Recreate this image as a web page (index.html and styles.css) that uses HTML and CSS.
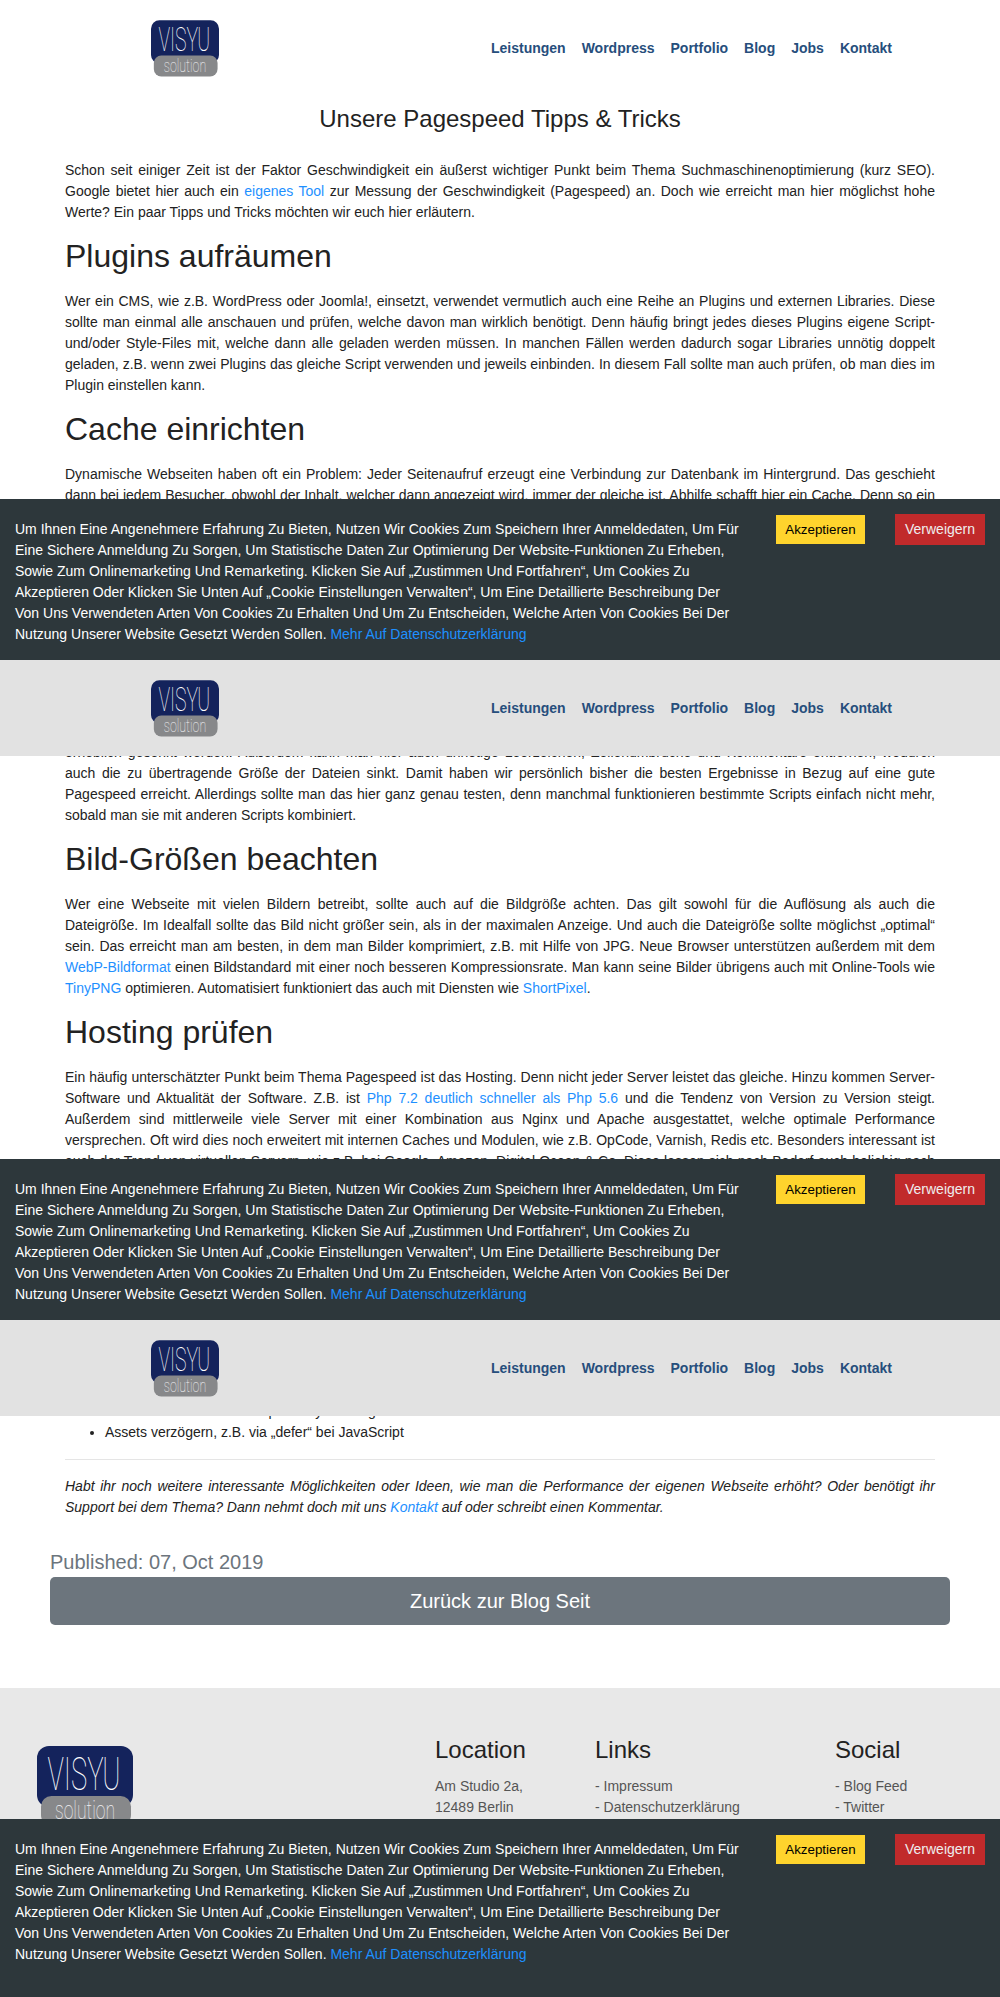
FILE: index.html
```html
<!DOCTYPE html>
<html lang="de">
<head>
<meta charset="utf-8">
<title>Unsere Pagespeed Tipps &amp; Tricks</title>
<link rel="stylesheet" href="styles.css">
</head>
<body>
<svg class="defs" width="0" height="0" aria-hidden="true">
  <symbol id="logo" viewBox="0 0 96 80">
    <rect width="96" height="61" rx="12" fill="#14235c"/>
    <rect x="4" y="50" width="90" height="29.5" rx="10.5" fill="#87888a"/>
    <text class="logo-top" x="10.5" y="44" textLength="73" lengthAdjust="spacingAndGlyphs">VISYU</text>
    <text class="logo-bottom" x="18" y="73" textLength="60" lengthAdjust="spacingAndGlyphs">solution</text>
  </symbol>
</svg>

<section class="screen">
  <header class="header">
    <svg class="logo"><use href="#logo"/></svg>
    <nav class="nav"><a>Leistungen</a><a>Wordpress</a><a>Portfolio</a><a>Blog</a><a>Jobs</a><a>Kontakt</a></nav>
  </header>
  <main class="content">
    <h1 class="title">Unsere Pagespeed Tipps &amp; Tricks</h1>
    <article class="article">
      <p>Schon seit einiger Zeit ist der Faktor Geschwindigkeit ein äußerst wichtiger Punkt beim Thema Suchmaschinenoptimierung (kurz SEO). Google bietet hier auch ein <a>eigenes Tool</a> zur Messung der Geschwindigkeit (Pagespeed) an. Doch wie erreicht man hier möglichst hohe Werte? Ein paar Tipps und Tricks möchten wir euch hier erläutern.</p>
      <h2>Plugins aufräumen</h2>
      <p>Wer ein CMS, wie z.B. WordPress oder Joomla!, einsetzt, verwendet vermutlich auch eine Reihe an Plugins und externen Libraries. Diese sollte man einmal alle anschauen und prüfen, welche davon man wirklich benötigt. Denn häufig bringt jedes dieses Plugins eigene Script- und/oder Style-Files mit, welche dann alle geladen werden müssen. In manchen Fällen werden dadurch sogar Libraries unnötig doppelt geladen, z.B. wenn zwei Plugins das gleiche Script verwenden und jeweils einbinden. In diesem Fall sollte man auch prüfen, ob man dies im Plugin einstellen kann.</p>
      <h2>Cache einrichten</h2>
      <p class="continued">Dynamische Webseiten haben oft ein Problem: Jeder Seitenaufruf erzeugt eine Verbindung zur Datenbank im Hintergrund. Das geschieht dann bei jedem Besucher, obwohl der Inhalt, welcher dann angezeigt wird, immer der gleiche ist. Abhilfe schafft hier ein Cache. Denn so ein</p>
    </article>
  </main>
  <aside class="cookie">
    <p class="cookie-text">Um Ihnen Eine Angenehmere Erfahrung Zu Bieten, Nutzen Wir Cookies Zum Speichern Ihrer Anmeldedaten, Um Für Eine Sichere Anmeldung Zu Sorgen, Um Statistische Daten Zur Optimierung Der Website-Funktionen Zu Erheben, Sowie Zum Onlinemarketing Und Remarketing. Klicken Sie Auf „Zustimmen Und Fortfahren“, Um Cookies Zu Akzeptieren Oder Klicken Sie Unten Auf „Cookie Einstellungen Verwalten“, Um Eine Detaillierte Beschreibung Der Von Uns Verwendeten Arten Von Cookies Zu Erhalten Und Um Zu Entscheiden, Welche Arten Von Cookies Bei Der Nutzung Unserer Website Gesetzt Werden Sollen. <a>Mehr Auf Datenschutzerklärung</a></p>
    <button class="accept">Akzeptieren</button>
    <button class="decline">Verweigern</button>
  </aside>
</section>

<section class="screen">
  <header class="header header-scrolled">
    <svg class="logo"><use href="#logo"/></svg>
    <nav class="nav"><a>Leistungen</a><a>Wordpress</a><a>Portfolio</a><a>Blog</a><a>Jobs</a><a>Kontakt</a></nav>
  </header>
  <main class="content">
    <article class="article article-middle">
      <p>erheblich gesenkt werden. Außerdem kann man hier auch unnötige Leerzeichen, Zeilenumbrüche und Kommentare entfernen, wodurch auch die zu übertragende Größe der Dateien sinkt. Damit haben wir persönlich bisher die besten Ergebnisse in Bezug auf eine gute Pagespeed erreicht. Allerdings sollte man das hier ganz genau testen, denn manchmal funktionieren bestimmte Scripts einfach nicht mehr, sobald man sie mit anderen Scripts kombiniert.</p>
      <h2>Bild-Größen beachten</h2>
      <p>Wer eine Webseite mit vielen Bildern betreibt, sollte auch auf die Bildgröße achten. Das gilt sowohl für die Auflösung als auch die Dateigröße. Im Idealfall sollte das Bild nicht größer sein, als in der maximalen Anzeige. Und auch die Dateigröße sollte möglichst „optimal“ sein. Das erreicht man am besten, in dem man Bilder komprimiert, z.B. mit Hilfe von JPG. Neue Browser unterstützen außerdem mit dem <a>WebP-Bildformat</a> einen Bildstandard mit einer noch besseren Kompressionsrate. Man kann seine Bilder übrigens auch mit Online-Tools wie <a>TinyPNG</a> optimieren. Automatisiert funktioniert das auch mit Diensten wie <a>ShortPixel</a>.</p>
      <h2>Hosting prüfen</h2>
      <p class="continued">Ein häufig unterschätzter Punkt beim Thema Pagespeed ist das Hosting. Denn nicht jeder Server leistet das gleiche. Hinzu kommen Server-Software und Aktualität der Software. Z.B. ist <a>Php 7.2 deutlich schneller als Php 5.6</a> und die Tendenz von Version zu Version steigt. Außerdem sind mittlerweile viele Server mit einer Kombination aus Nginx und Apache ausgestattet, welche optimale Performance versprechen. Oft wird dies noch erweitert mit internen Caches und Modulen, wie z.B. OpCode, Varnish, Redis etc. Besonders interessant ist auch der Trend von virtuellen Servern, wie z.B. bei Google, Amazon, Digital Ocean &amp; Co. Diese lassen sich nach Bedarf auch beliebig nach</p>
    </article>
  </main>
  <aside class="cookie">
    <p class="cookie-text">Um Ihnen Eine Angenehmere Erfahrung Zu Bieten, Nutzen Wir Cookies Zum Speichern Ihrer Anmeldedaten, Um Für Eine Sichere Anmeldung Zu Sorgen, Um Statistische Daten Zur Optimierung Der Website-Funktionen Zu Erheben, Sowie Zum Onlinemarketing Und Remarketing. Klicken Sie Auf „Zustimmen Und Fortfahren“, Um Cookies Zu Akzeptieren Oder Klicken Sie Unten Auf „Cookie Einstellungen Verwalten“, Um Eine Detaillierte Beschreibung Der Von Uns Verwendeten Arten Von Cookies Zu Erhalten Und Um Zu Entscheiden, Welche Arten Von Cookies Bei Der Nutzung Unserer Website Gesetzt Werden Sollen. <a>Mehr Auf Datenschutzerklärung</a></p>
    <button class="accept">Akzeptieren</button>
    <button class="decline">Verweigern</button>
  </aside>
</section>

<section class="screen screen-last">
  <header class="header header-scrolled">
    <svg class="logo"><use href="#logo"/></svg>
    <nav class="nav"><a>Leistungen</a><a>Wordpress</a><a>Portfolio</a><a>Blog</a><a>Jobs</a><a>Kontakt</a></nav>
  </header>
  <main class="content">
    <article class="article article-end">
      <ul>
        <li>Einbinden von Elementen per Lazy Loading</li>
        <li>Assets verzögern, z.B. via „defer“ bei JavaScript</li>
      </ul>
      <hr>
      <p><em>Habt ihr noch weitere interessante Möglichkeiten oder Ideen, wie man die Performance der eigenen Webseite erhöht? Oder benötigt ihr Support bei dem Thema? Dann nehmt doch mit uns <a>Kontakt</a> auf oder schreibt einen Kommentar.</em></p>
    </article>
    <div class="meta">
      <div class="published">Published: 07, Oct 2019</div>
      <a class="back">Zurück zur Blog Seit</a>
    </div>
    <footer class="footer">
      <svg class="footer-logo"><use href="#logo"/></svg>
      <div><h3>Location</h3>Am Studio 2a,<br>12489 Berlin</div>
      <div><h3>Links</h3>- Impressum<br>- Datenschutzerklärung</div>
      <div><h3>Social</h3>- Blog Feed<br>- Twitter</div>
    </footer>
  </main>
  <aside class="cookie">
    <p class="cookie-text">Um Ihnen Eine Angenehmere Erfahrung Zu Bieten, Nutzen Wir Cookies Zum Speichern Ihrer Anmeldedaten, Um Für Eine Sichere Anmeldung Zu Sorgen, Um Statistische Daten Zur Optimierung Der Website-Funktionen Zu Erheben, Sowie Zum Onlinemarketing Und Remarketing. Klicken Sie Auf „Zustimmen Und Fortfahren“, Um Cookies Zu Akzeptieren Oder Klicken Sie Unten Auf „Cookie Einstellungen Verwalten“, Um Eine Detaillierte Beschreibung Der Von Uns Verwendeten Arten Von Cookies Zu Erhalten Und Um Zu Entscheiden, Welche Arten Von Cookies Bei Der Nutzung Unserer Website Gesetzt Werden Sollen. <a>Mehr Auf Datenschutzerklärung</a></p>
    <button class="accept">Akzeptieren</button>
    <button class="decline">Verweigern</button>
  </aside>
</section>
</body>
</html>
```
FILE: styles.css
```css
* { box-sizing: border-box; }
body {
  margin: 0;
  background: #fff;
  color: #222;
  font: 14px/21px "Liberation Sans", Arial, sans-serif;
}
a { color: #1e90ff; text-decoration: none; }
p, h1, h2, h3, ul { margin: 0; font-weight: 400; }
.defs { display: block; }

.screen { display: flex; flex-direction: column; height: 660px; }
.screen-last { height: 677px; }

.header {
  flex: none;
  display: flex;
  justify-content: space-between;
  height: 96px;
  padding: 20px 108px 0 151px;
}
.header-scrolled { background: #e2e2e2; }
.logo { width: 68px; height: 57px; }
.nav { display: flex; gap: 16px; padding-top: 18px; }
.nav a { color: #264e7c; font-weight: 700; }
.logo-top, .logo-bottom { fill: #fff; font-family: Roboto, sans-serif; font-weight: 100; }
.logo-top { font-size: 46px; }
.logo-bottom { font-size: 26px; fill: #f2f2f4; }

.content { flex: none; height: 403px; overflow: hidden; }
.title { padding-top: 8px; font-size: 24px; line-height: 29px; text-align: center; }
.article { padding: 27px 65px 0; text-align: justify; }
.article h2 { margin: 14px 0 16px; font-size: 32px; line-height: 38px; }
.article .continued { text-align-last: justify; }
.article-middle { margin-top: -14px; padding-top: 0; }
.article-end { margin-top: -15px; padding-top: 0; }
.article ul { padding-left: 40px; }
.article hr { height: 1px; margin: 16px 0; border: 0; background: #e5e5e5; }

.meta { padding: 29px 50px 0; }
.published { color: #6c757d; font-size: 20px; line-height: 30px; }
.back {
  display: block;
  height: 48px;
  border-radius: 5px;
  background: #6c757d;
  color: #fff;
  font-size: 20px;
  line-height: 48px;
  text-align: center;
}
.footer {
  display: grid;
  grid-template-columns: 398px 160px 240px 1fr;
  height: 240px;
  margin-top: 63px;
  padding: 47px 0 0 37px;
  background: #e8e8e8;
  color: #555;
}
.footer h3 { margin-bottom: 12px; color: #222; font-size: 24px; line-height: 29px; }
.footer-logo { width: 96px; height: 80px; margin-top: 11px; }

.cookie {
  flex: 1;
  display: flex;
  align-items: flex-start;
  padding: 15px 15px 0;
  background: #2d373b;
  color: #fff;
}
.cookie-text { width: 730px; padding-top: 5px; }
.cookie button { padding: 0; border: 0; font-family: "Liberation Sans", Arial, sans-serif; }
.accept { width: 89px; height: 29px; margin: 1px 30px 0 31px; background: #ffd42d; color: #000; font-size: 13.333px; }
.decline { width: 90px; height: 31px; padding-bottom: 1px !important; background: #c12a2b; color: #eee; font-size: 14px; }
```
